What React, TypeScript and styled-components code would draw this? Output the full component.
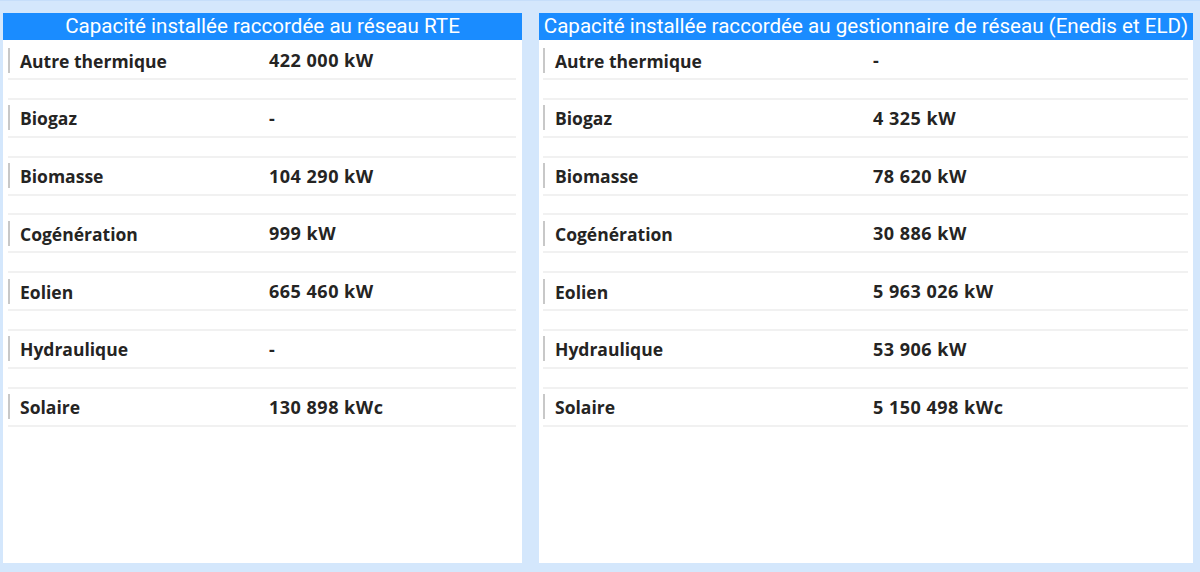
import React from "react";
import styled, { createGlobalStyle } from "styled-components";

const Global = createGlobalStyle`
  html, body { margin: 0; padding: 0; background: #d4e7fc; }
  #root { width: 1200px; height: 572px; }
`;

const Page = styled.div`
  box-sizing: border-box;
  width: 1200px;
  height: 572px;
  padding: 13px 7px 9px 3px;
  display: grid;
  grid-template-columns: 519px 654px;
  column-gap: 17px;
  background: #d4e7fc;
  border-top: 1px solid #c6defa;
`;

const Panel = styled.section`
  background: #ffffff;
  display: flex;
  flex-direction: column;
  margin-top: -1px;
`;

const Header = styled.h2`
  margin: 0;
  height: 27px;
  line-height: 26px;
  background: #1a8cff;
  color: #ffffff;
  text-align: center;
  font-family: "Roboto", "DejaVu Sans Condensed", sans-serif;
  font-weight: 400;
  font-size: 20.6px;
  white-space: nowrap;
`;

const List = styled.div<{ $side: number }>`
  display: flex;
  flex-direction: column;
  row-gap: 17.75px;
  padding: 0 ${(p) => p.$side + 1}px 0 ${(p) => p.$side}px;
`;

const Row = styled.div<{ $first?: boolean; $labelW: number }>`
  display: grid;
  grid-template-columns: ${(p) => p.$labelW}px 1fr;
  align-items: center;
  height: 36px;
  border-top: 2px solid ${(p) => (p.$first ? "transparent" : "#f1f1f1")};
  border-bottom: 2px solid #f1f1f1;
  font-family: "Open Sans", "Noto Sans", sans-serif;
  font-weight: 700;
  color: #252423;
`;

const Label = styled.div`
  height: 25px;
  line-height: 26px;
  border-left: 2px solid #c8c8c8;
  padding-left: 10px;
  font-size: 17.5px;
  white-space: nowrap;
`;

const Value = styled.div`
  font-size: 18px;
  letter-spacing: 0.5px;
  white-space: nowrap;
`;

type Item = [string, string];

const rte: Item[] = [
  ["Autre thermique", "422 000 kW"],
  ["Biogaz", "-"],
  ["Biomasse", "104 290 kW"],
  ["Cogénération", "999 kW"],
  ["Eolien", "665 460 kW"],
  ["Hydraulique", "-"],
  ["Solaire", "130 898 kWc"],
];

const enedis: Item[] = [
  ["Autre thermique", "-"],
  ["Biogaz", "4 325 kW"],
  ["Biomasse", "78 620 kW"],
  ["Cogénération", "30 886 kW"],
  ["Eolien", "5 963 026 kW"],
  ["Hydraulique", "53 906 kW"],
  ["Solaire", "5 150 498 kWc"],
];

function Table({
  title,
  items,
  side,
  labelW,
}: {
  title: string;
  items: Item[];
  side: number;
  labelW: number;
}) {
  return (
    <Panel>
      <Header>{title}</Header>
      <List $side={side}>
        {items.map(([k, v], i) => (
          <Row key={k} $first={i === 0} $labelW={labelW}>
            <Label>{k}</Label>
            <Value>{v}</Value>
          </Row>
        ))}
      </List>
    </Panel>
  );
}

export default function App() {
  return (
    <>
      <Global />
      <Page>
        <Table
          title="Capacité installée raccordée au réseau RTE"
          items={rte}
          side={5}
          labelW={261}
        />
        <Table
          title="Capacité installée raccordée au gestionnaire de réseau (Enedis et ELD)"
          items={enedis}
          side={4}
          labelW={330}
        />
      </Page>
    </>
  );
}
